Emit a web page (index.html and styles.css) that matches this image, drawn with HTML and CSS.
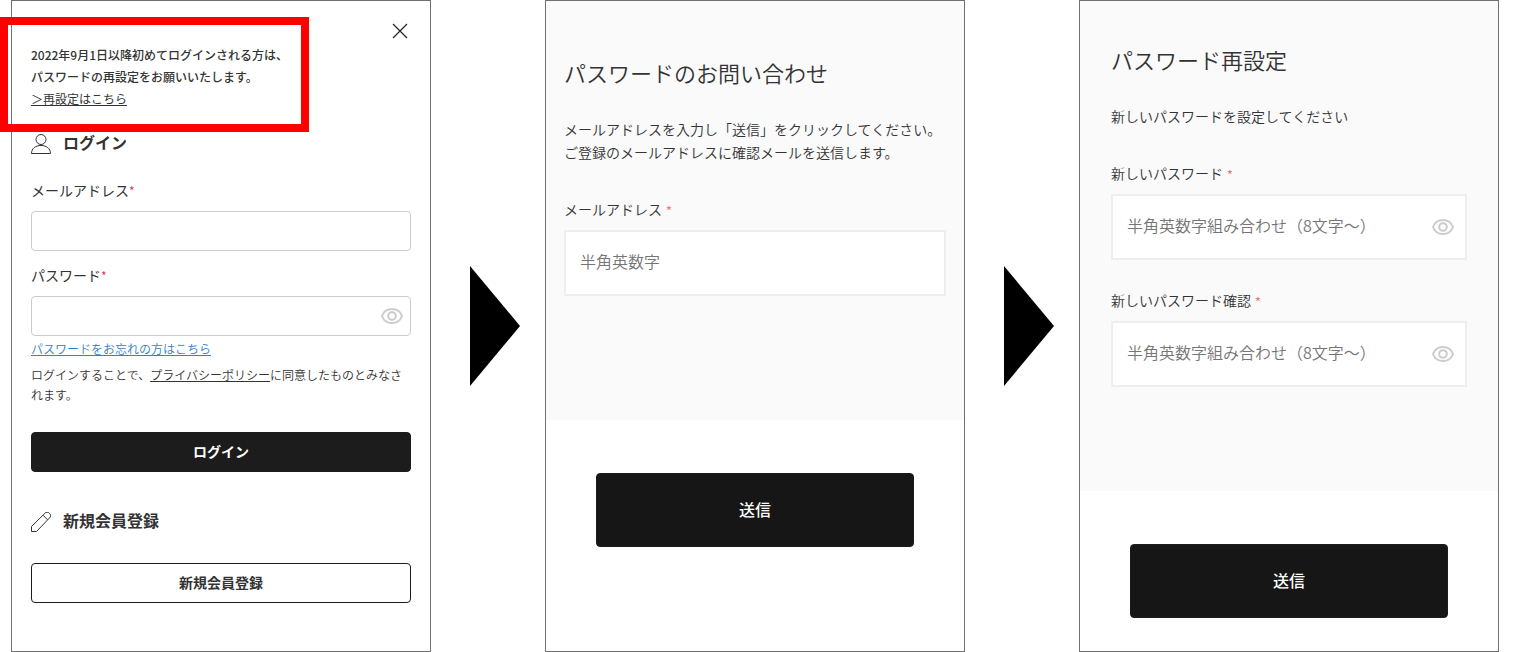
FILE: index.html
```html
<!DOCTYPE html>
<html lang="ja">
<head>
<meta charset="utf-8">
<meta name="viewport" content="width=device-width, initial-scale=1">
<title>パスワード再設定の手順</title>
<link rel="stylesheet" href="styles.css">
</head>
<body>
<svg class="symbols" aria-hidden="true">
  <symbol id="eye" viewBox="0 0 24 18">
    <path d="M2 9C3.600 4.600 7.200 2 12 2s8.400 2.600 10 7c-1.600 4.400-5.200 7-10 7S3.600 13.400 2 9z" fill="none" stroke="currentColor" stroke-width="2"/>
    <circle cx="12" cy="9" r="3.800" fill="none" stroke="currentColor" stroke-width="2"/>
  </symbol>
</svg>
<main class="flow">
  <section class="panel login">
    <button class="close" type="button" aria-label="閉じる">
      <svg viewBox="0 0 14 14" aria-hidden="true"><path d="M0 0l14 14M14 0L0 14"/></svg>
    </button>
    <div class="notice">
      <p>2022年9月1日以降初めてログインされる方は、</p>
      <p>パスワードの再設定をお願いいたします。</p>
      <p><a href="#reset">＞再設定はこちら</a></p>
    </div>
    <span class="highlight" aria-hidden="true"></span>
    <form>
      <h2 class="section-title">
        <svg viewBox="0 0 20 20" aria-hidden="true"><circle cx="10" cy="5.500" r="5"/><path d="M0.500 19.500c0-5 4-8 9.500-8s9.500 3 9.500 8z"/></svg>
        ログイン
      </h2>
      <label class="label" for="login-mail">メールアドレス<span class="required">*</span></label>
      <input class="input" id="login-mail" type="email">
      <label class="label next" for="login-pass">パスワード<span class="required">*</span></label>
      <div class="field">
        <input class="input" id="login-pass" type="password">
        <button class="reveal" type="button" aria-label="パスワードを表示"><svg aria-hidden="true"><use href="#eye"/></svg></button>
      </div>
      <a class="forgot" href="#forgot">パスワードをお忘れの方はこちら</a>
      <p class="terms">ログインすることで、<a href="#privacy">プライバシーポリシー</a>に同意したものとみなされます。</p>
      <button class="button" type="submit">ログイン</button>
    </form>
    <h2 class="section-title signup">
      <svg viewBox="0 0 20 20" aria-hidden="true"><path d="M0.500 19.500v-5L13.800 1.400a2.800 2.800 0 0 1 4.600 0 2.800 2.800 0 0 1 0 4.600L5.500 19.500zM12 3.200l4.600 4.600"/></svg>
      新規会員登録
    </h2>
    <button class="button outline" type="button">新規会員登録</button>
  </section>

  <svg class="arrow" viewBox="0 0 50 120" aria-hidden="true"><path d="M0 0l50 60L0 120z"/></svg>

  <form class="panel step inquiry" id="forgot">
    <div class="body">
      <h2 class="heading">パスワードのお問い合わせ</h2>
      <p class="lead">メールアドレスを入力し「送信」をクリックしてください。<br>ご登録のメールアドレスに確認メールを送信します。</p>
      <label class="label" for="mail">メールアドレス<span class="required">*</span></label>
      <input class="input" id="mail" type="email" placeholder="半角英数字">
    </div>
    <button class="button send" type="submit">送信</button>
  </form>

  <svg class="arrow" viewBox="0 0 50 120" aria-hidden="true"><path d="M0 0l50 60L0 120z"/></svg>

  <form class="panel step reset" id="reset">
    <div class="body">
      <h2 class="heading">パスワード再設定</h2>
      <p class="lead">新しいパスワードを設定してください</p>
      <label class="label" for="new-pass">新しいパスワード<span class="required">*</span></label>
      <div class="field">
        <input class="input" id="new-pass" type="password" placeholder="半角英数字組み合わせ（8文字～）">
        <button class="reveal" type="button" aria-label="パスワードを表示"><svg aria-hidden="true"><use href="#eye"/></svg></button>
      </div>
      <label class="label next" for="confirm-pass">新しいパスワード確認<span class="required">*</span></label>
      <div class="field">
        <input class="input" id="confirm-pass" type="password" placeholder="半角英数字組み合わせ（8文字～）">
        <button class="reveal" type="button" aria-label="パスワードを表示"><svg aria-hidden="true"><use href="#eye"/></svg></button>
      </div>
    </div>
    <button class="button send" type="submit">送信</button>
  </form>
</main>
</body>
</html>
```
FILE: styles.css
```css
* {
  box-sizing: border-box;
}

body {
  margin: 0;
  background: #fff;
  color: #333;
  font-family: "Noto Sans CJK JP", sans-serif;
  font-size: 14px;
  font-weight: 350;
}

h2,
p {
  margin: 0;
}

a {
  color: inherit;
}

button,
input {
  font: inherit;
}

.symbols {
  position: absolute;
  width: 0;
  height: 0;
}

.flow {
  display: grid;
  grid-template-columns: minmax(0, 1fr) auto minmax(0, 1fr) auto minmax(0, 1fr);
  min-height: 100vh;
  padding: 0 14px 0 11px;
}

.panel {
  position: relative;
  border: 1px solid #707070;
}

.arrow {
  align-self: center;
  width: 50px;
  height: 120px;
  margin: 0 25px 0 39px;
}

.login {
  padding: 43px 19px 40px;
}

.close {
  position: absolute;
  top: 16px;
  right: 16px;
  width: 28px;
  height: 28px;
  padding: 7px;
  border: 0;
  background: none;
}

.close svg {
  display: block;
  width: 14px;
  height: 14px;
  overflow: visible;
  stroke: #222;
  stroke-width: 1.2;
}

.notice {
  font-size: 12px;
  font-weight: 500;
  line-height: 22px;
}

.notice a {
  font-weight: 400;
}

.highlight {
  position: absolute;
  top: 16px;
  left: -12px;
  width: 309px;
  height: 115px;
  border: 8px solid #f00;
  pointer-events: none;
}

.section-title {
  display: flex;
  align-items: center;
  gap: 12px;
  margin-top: 20px;
  margin-bottom: 26px;
  font-size: 16px;
  font-weight: 700;
  line-height: 24px;
}

.section-title svg {
  width: 20px;
  height: 20px;
  margin-top: 4px;
  fill: none;
  stroke: #333;
  stroke-width: 1;
}

.label {
  display: block;
  margin-bottom: 11px;
  line-height: 20px;
}

.login .label {
  font-weight: 400;
}

.next {
  margin-top: 14px;
}

.required {
  color: #d9434e;
  font-size: 12px;
  line-height: 16px;
}

.input {
  display: block;
  width: 100%;
  height: 40px;
  padding: 0 48px 0 14px;
  border: 1px solid #ccc;
  border-radius: 4px;
  background: #fff;
  color: #333;
}

.field {
  position: relative;
}

.reveal {
  position: absolute;
  top: 0;
  right: 7px;
  bottom: 0;
  display: flex;
  align-items: center;
  padding: 0;
  border: 0;
  background: none;
  color: #ccc;
}

.reveal svg {
  width: 24px;
  height: 18px;
}

.forgot {
  display: block;
  width: fit-content;
  margin-top: 4px;
  color: #3480c4;
  font-size: 12px;
  line-height: 18px;
}

.terms {
  margin-top: 7px;
  margin-bottom: 27px;
  font-size: 12px;
  line-height: 20px;
}

.button {
  display: block;
  width: 100%;
  height: 40px;
  padding: 0 0 2px;
  border: 1px solid #1c1c1c;
  border-radius: 4px;
  background: #1c1c1c;
  color: #fff;
  font-weight: 700;
}

.signup {
  margin-top: 36px;
  margin-bottom: 31px;
}

.outline {
  background: #fff;
  color: #333;
}

.body {
  background: #fafafa;
}

.inquiry .body {
  padding: 55px 18px 124px;
}

.reset .body {
  padding: 42px 31px 104px;
}

.heading {
  font-size: 22px;
  font-weight: 350;
  line-height: 32px;
}

.step .lead {
  margin: 30px 0 35px;
  line-height: 23px;
}

.step .required {
  margin-left: 4px;
  color: #f07878;
  font-weight: 500;
}

.step .input {
  height: 66px;
  padding-bottom: 4px;
  border: 2px solid #eee;
  border-radius: 0;
  font-size: 16px;
}

.step .next {
  margin-top: 30px;
}

.step .input::placeholder {
  color: #757575;
  opacity: 1;
}

.step .reveal {
  right: 12px;
}

.send {
  width: auto;
  min-width: 76%;
  height: 74px;
  margin: 53px auto 24px;
  background: #161616;
  font-size: 16px;
  font-weight: 500;
}
```
